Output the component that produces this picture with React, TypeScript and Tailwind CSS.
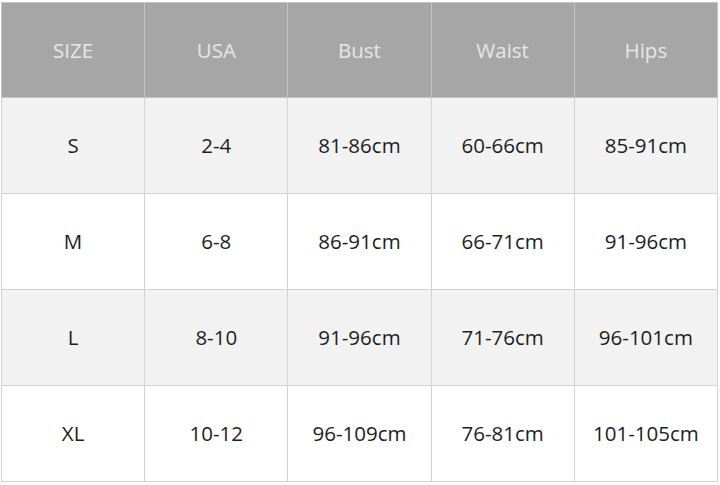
import React from 'react';

const headers = ['SIZE', 'USA', 'Bust', 'Waist', 'Hips'];

const rows = [
  ['S', '2-4', '81-86cm', '60-66cm', '85-91cm'],
  ['M', '6-8', '86-91cm', '66-71cm', '91-96cm'],
  ['L', '8-10', '91-96cm', '71-76cm', '96-101cm'],
  ['XL', '10-12', '96-109cm', '76-81cm', '101-105cm'],
];

export default function App() {
  return (
    <div className="w-[720px] h-[485px] bg-white pt-[2px] pl-[1px]" style={{ fontFamily: '"Open Sans", "Noto Sans", sans-serif' }}>
      <table className="border-collapse w-[717px] table-fixed text-[20.5px]">
        <thead>
          <tr className="h-[95px] bg-[#a6a6a6]">
            {headers.map((h) => (
              <th key={h} className="border border-[#c4c4c4] font-normal text-[#e6e6e6] text-center">
                {h}
              </th>
            ))}
          </tr>
        </thead>
        <tbody>
          {rows.map((r, i) => (
            <tr key={r[0]} className={`h-[96px] ${i % 2 === 0 ? 'bg-[#f2f2f2]' : 'bg-white'}`}>
              {r.map((c, j) => (
                <td key={j} className="border border-[#d2d2d2] text-center text-[#1e1e1e]">
                  {c}
                </td>
              ))}
            </tr>
          ))}
        </tbody>
      </table>
    </div>
  );
}
